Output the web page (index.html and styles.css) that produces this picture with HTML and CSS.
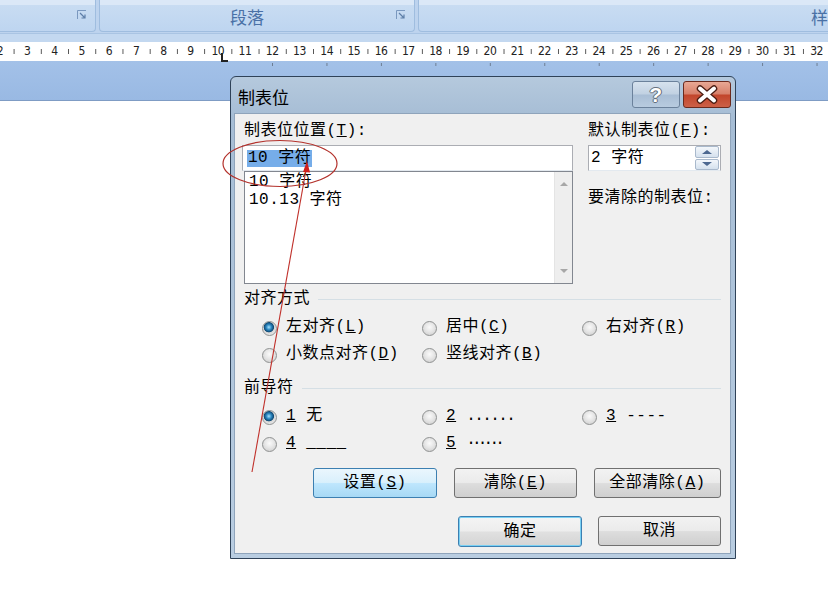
FILE: index.html
```html
<!DOCTYPE html>
<html lang="zh-CN">
<head>
  <meta charset="UTF-8">
  <title>制表位</title>
  <link rel="stylesheet" href="styles.css">
</head>
<body>

  <!-- Ribbon groups -->
  <div class="ribbon">
    <div class="group g1">
      <span class="glabel"></span>
      <span class="launcher"><svg width="10" height="10" viewBox="0 0 10 10"><path d="M0.5 9V0.5H9" fill="none" stroke="#7a98bf"/><path d="M3 3L8 8M8 4.5V8H4.5" fill="none" stroke="#5d7ea8" stroke-width="1.2"/></svg></span>
    </div>
    <div class="group g2">
      <span class="glabel">段落</span>
      <span class="launcher"><svg width="10" height="10" viewBox="0 0 10 10"><path d="M0.5 9V0.5H9" fill="none" stroke="#7a98bf"/><path d="M3 3L8 8M8 4.5V8H4.5" fill="none" stroke="#5d7ea8" stroke-width="1.2"/></svg></span>
    </div>
    <div class="group g3">
      <span class="glabel">样式</span>
    </div>
  </div>

  <!-- Ruler -->
  <div class="ruler-top"></div>
  <div class="ruler">
    <div class="nums">
      <span>2</span><span>3</span><span>4</span><span>5</span><span>6</span><span>7</span><span>8</span><span>9</span>
      <span>10</span><span>11</span><span>12</span><span>13</span><span>14</span><span>15</span><span>16</span><span>17</span>
      <span>18</span><span>19</span><span>20</span><span>21</span><span>22</span><span>23</span><span>24</span><span>25</span>
      <span>26</span><span>27</span><span>28</span><span>29</span><span>30</span><span>31</span><span>32</span>
    </div>
    <span class="tab-l"></span>
  </div>
  <div class="ruler-foot"><div class="stops"></div></div>

  <div class="page"></div>

  <!-- Tabs dialog -->
  <div class="dialog">
    <div class="titlebar">
      <span class="title">制表位</span>
      <div class="caption-btns">
        <span class="cbtn help">?</span>
        <span class="cbtn close">
          <svg width="46" height="25" viewBox="0 0 46 25">
            <path d="M16 6.5L30 18.5M30 6.5L16 18.5" stroke="#4a1c12" stroke-width="6.5" stroke-linecap="round"/>
            <path d="M16 6.5L30 18.5M30 6.5L16 18.5" stroke="#ffffff" stroke-width="4" stroke-linecap="round"/>
          </svg>
        </span>
      </div>
    </div>

    <div class="client">
      <div class="top">
        <div class="col-left">
          <div class="lbl">制表位位置(<u>T</u>):</div>
          <div class="field"><span class="sel">10 字符</span></div>
          <div class="listbox">
            <div class="items">
              <div>10 字符</div>
              <div>10.13 字符</div>
            </div>
            <div class="vscroll">
              <span class="arr up"></span>
              <span class="arr down"></span>
            </div>
          </div>
        </div>
        <div class="col-right">
          <div class="lbl">默认制表位(<u>F</u>):</div>
          <div class="spin">
            <span class="spin-val">2 字符</span>
            <div class="spin-btns">
              <span class="sb up"></span>
              <span class="sb down"></span>
            </div>
          </div>
          <div class="lbl clear-lbl">要清除的制表位:</div>
        </div>
      </div>

      <div class="group-head"><span>对齐方式</span></div>
      <div class="radios">
        <div class="radio on"><span>左对齐(<u>L</u>)</span></div>
        <div class="radio"><span>居中(<u>C</u>)</span></div>
        <div class="radio"><span>右对齐(<u>R</u>)</span></div>
        <div class="radio"><span>小数点对齐(<u>D</u>)</span></div>
        <div class="radio"><span>竖线对齐(<u>B</u>)</span></div>
      </div>

      <div class="group-head"><span>前导符</span></div>
      <div class="radios">
        <div class="radio on"><span><u>1</u> 无</span></div>
        <div class="radio"><span><u>2</u> <span class="dots">......</span></span></div>
        <div class="radio"><span><u>3</u> ----</span></div>
        <div class="radio"><span><u>4</u> ____</span></div>
        <div class="radio"><span><u>5</u> <span class="mdots">······</span></span></div>
      </div>

      <div class="btn-row">
        <span class="btn hot w124"><span>设置(<u>S</u>)</span></span>
        <span class="btn w123"><span>清除(<u>E</u>)</span></span>
        <span class="btn w127"><span>全部清除(<u>A</u>)</span></span>
      </div>
      <div class="btn-row second">
        <span class="btn default w124">确定</span>
        <span class="btn w123">取消</span>
      </div>
    </div>
  </div>

  <!-- red hand-drawn markup -->
  <svg class="markup" width="828" height="603" viewBox="0 0 828 603">
    <ellipse cx="280" cy="163.5" rx="57" ry="23" fill="none" stroke="#b3312b" stroke-width="1.2"/>
    <path d="M252 472L306 170" stroke="#c0302a" stroke-width="1.1"/>
    <polygon points="307,161 303,172 310,172.5" fill="#d0201c"/>
  </svg>

</body>
</html>
```

FILE: styles.css
```css
* {
  box-sizing: border-box;
  margin: 0;
  padding: 0;
}

body {
  position: relative;
  width: 828px;
  height: 603px;
  overflow: hidden;
  background: #ffffff;
  font-family: "Noto Sans CJK SC", sans-serif;
}

/* Ribbon */
.ribbon {
  display: flex;
  gap: 3px;
  height: 33px;
  background: #bdd3ee;
}

.group {
  position: relative;
  flex: none;
  height: 32px;
  padding: 3px 20px 0 0;
  display: flex;
  align-items: center;
  justify-content: center;
  border: 1px solid #9fbddf;
  border-top: 0;
  border-radius: 0 0 4px 4px;
  background: linear-gradient(#dbe8f7 0, #dbe8f7 5px, #c8dcf2 5px, #bed5f0 100%);
}

.g1 {
  margin-left: -10px;
  width: 106px;
}

.g2 {
  width: 316px;
}

.g3 {
  width: 840px;
}

.glabel {
  font-size: 17px;
  line-height: 20px;
  color: #4a71a6;
}

.launcher {
  position: absolute;
  right: 8px;
  top: 10px;
  width: 10px;
  height: 10px;
  display: flex;
}

/* Ruler */
.ruler-top {
  height: 9px;
  background: #c3d8f0;
  border-top: 1px solid #a9c4e3;
}

.ruler {
  position: relative;
  height: 19px;
  background-color: #ffffff;
  background-image: linear-gradient(to right, #555 1px, transparent 1px);
  background-size: 27.23px 5px;
  background-position: 13.6px 7px;
  background-repeat: repeat-x;
}

.nums {
  display: flex;
  margin-left: -13.6px;
  font-family: "Liberation Sans Narrow", "DejaVu Sans Condensed", "Liberation Sans", sans-serif;
  font-size: 12px;
  line-height: 19px;
  color: #222;
}

.nums span {
  flex: none;
  width: 27.23px;
  text-align: center;
  letter-spacing: -0.5px;
}

.tab-l {
  position: absolute;
  left: 221px;
  top: 11px;
  width: 7px;
  height: 9px;
  border-left: 2px solid #222;
  border-bottom: 2px solid #222;
}

.ruler-foot {
  height: 40px;
  padding-top: 2px;
  background: linear-gradient(#a3c1e8, #99b9e3);
  border-bottom: 1px solid #7f9cc4;
}

.stops {
  margin-left: 272px;
  height: 3px;
  background-image: linear-gradient(to right, #6d7d92 1px, transparent 1px);
  background-size: 54.46px 3px;
}

.page {
  height: 502px;
  background: #ffffff;
}

/* Dialog window */
.dialog {
  position: absolute;
  left: 230px;
  top: 76px;
  width: 506px;
  height: 483px;
  display: flex;
  flex-direction: column;
  padding: 0 4px 4px 3px;
  border: 1px solid #2f4258;
  border-radius: 6px 6px 0 0;
  background: linear-gradient(#b5c9dd, #a6bdd5 40px, #b9cde1);
  font-family: "Liberation Mono", "Noto Sans CJK SC", monospace;
  font-size: 16px;
  letter-spacing: 0.5px;
  color: #000;
}

.titlebar {
  height: 36px;
  display: flex;
  justify-content: space-between;
  align-items: flex-start;
  padding-top: 4px;
}

.title {
  margin: 5px 0 0 4px;
  font-family: "Noto Sans CJK SC", sans-serif;
  font-size: 17px;
  line-height: 22px;
  letter-spacing: 0;
}

.caption-btns {
  display: flex;
  gap: 3px;
}

.cbtn {
  width: 48px;
  height: 27px;
  display: flex;
  align-items: center;
  justify-content: center;
  border-radius: 3px;
}

.help {
  border: 1px solid #6b819b;
  background: linear-gradient(#d6e2ee 0%, #c1d1e2 48%, #a9bed5 52%, #b8cbdf 100%);
  font-family: "Liberation Sans", sans-serif;
  font-weight: bold;
  font-size: 21px;
  color: #ffffff;
  text-shadow: 0 0 1px #3e4a58, 1px 0 0 #6b7684, -1px 0 0 #6b7684, 0 1px 0 #6b7684, 0 -1px 0 #6b7684;
}

.close {
  border: 1px solid #6a2a1e;
  background: linear-gradient(#e8a894 0%, #d7806a 48%, #c2452b 52%, #cc6047 100%);
}

.client {
  flex: 1;
  padding: 7px 9px 0 9px;
  background: #f0f0f0;
  border: 1px solid #8fa4bb;
}

.top {
  display: flex;
  gap: 15px;
}

.col-left {
  width: 329px;
}

.col-right {
  flex: 1;
}

.lbl {
  line-height: 20px;
  height: 20px;
  white-space: nowrap;
}

.field {
  margin: 4px 0 0 -2px;
  height: 26px;
  padding: 3px 0 0 4px;
  background: #ffffff;
  border: 1px solid #abadb3;
  border-bottom-color: #e3e9ef;
}

.sel {
  display: inline-block;
  line-height: 17px;
  padding: 0 1px;
  background: #76ade9;
}

.listbox {
  height: 113px;
  display: flex;
  background: #ffffff;
  border: 1px solid #828790;
}

.items {
  flex: 1;
  padding: 1px 4px;
  line-height: 18px;
}

.vscroll {
  width: 18px;
  display: flex;
  flex-direction: column;
  justify-content: space-between;
  align-items: center;
  padding: 10px 0 10px;
  background: #eeeeee;
  border-left: 1px solid #e4e4e4;
}

.arr {
  width: 0;
  height: 0;
  border-left: 4px solid transparent;
  border-right: 4px solid transparent;
}

.arr.up {
  border-bottom: 4px solid #a7a7a7;
}

.arr.down {
  border-top: 4px solid #a7a7a7;
}

.spin {
  margin-top: 4px;
  height: 26px;
  display: flex;
  align-items: center;
  justify-content: space-between;
  padding-left: 2px;
  background: #ffffff;
  border: 1px solid #abadb3;
  border-bottom-color: #e3e9ef;
}

.spin-val {
  line-height: 20px;
}

.spin-btns {
  width: 24px;
  height: 24px;
  display: flex;
  flex-direction: column;
  gap: 1px;
  margin-right: 1px;
}

.sb {
  flex: 1;
  display: flex;
  align-items: center;
  justify-content: center;
  border: 1px solid #a9b9cc;
  border-radius: 2px;
  background: linear-gradient(#f3f7fb, #d5e1ee);
}

.sb::after {
  content: "";
  width: 0;
  height: 0;
  border-left: 5px solid transparent;
  border-right: 5px solid transparent;
}

.sb.up::after {
  border-bottom: 4px solid #4c6890;
}

.sb.down::after {
  border-top: 4px solid #4c6890;
}

.clear-lbl {
  margin-top: 17px;
}

/* Group headings with rule */
.group-head {
  display: flex;
  align-items: center;
  gap: 8px;
  margin-top: 5px;
  line-height: 20px;
}

.group-head::after {
  content: "";
  flex: 1;
  height: 1px;
  background: #d5dfe5;
}

.radios {
  display: grid;
  grid-template-columns: 160px 160px 160px;
  grid-auto-rows: 27px;
  margin: 6px 0 9px 18px;
}

.radio {
  display: flex;
  align-items: center;
  gap: 9px;
  white-space: pre;
}

.radio > span {
  line-height: 20px;
  margin-top: -3px;
}

.radio::before {
  content: "";
  flex: none;
  width: 13px;
  height: 13px;
  border-radius: 50%;
  border: 1px solid #8f9191;
  background: radial-gradient(circle at 50% 40%, #fafafa 0, #e6e6e6 45%, #c9c9c9 100%);
}

.radio.on::before {
  background: radial-gradient(circle at 45% 40%, #a6e3ff 0, #2c87c0 25%, #0f4a75 45%, #d7d7d7 52%, #ececec 80%);
}

.dots {
  letter-spacing: -1.6px;
}

.mdots {
  letter-spacing: -3.8px;
}

/* Push buttons */
.btn-row {
  display: flex;
  justify-content: flex-end;
  gap: 17px;
  margin-top: 10px;
}

.btn-row.second {
  gap: 16px;
  margin-top: 18px;
}

.btn {
  height: 30px;
  display: flex;
  align-items: center;
  justify-content: center;
  border: 1px solid #707070;
  border-radius: 3px;
  background: linear-gradient(#f2f2f2 0%, #ebebeb 48%, #dddddd 52%, #cfcfcf 100%);
  line-height: 20px;
}

.btn.hot {
  border-color: #3c7fb1;
  background: linear-gradient(#eaf6fd 0%, #d9f0fc 48%, #bee6fd 52%, #a7d9f5 100%);
}

.btn.default {
  height: 31px;
  border-color: #3c7fb1;
  box-shadow: inset 0 0 0 1px #79d0f3;
  background: linear-gradient(#f4f4f4 0%, #ededed 48%, #e0e0e0 52%, #d4d4d4 100%);
}

.w124 {
  width: 124px;
}

.w123 {
  width: 123px;
}

.w127 {
  width: 127px;
}

.markup {
  position: absolute;
  left: 0;
  top: 0;
  pointer-events: none;
}
```
